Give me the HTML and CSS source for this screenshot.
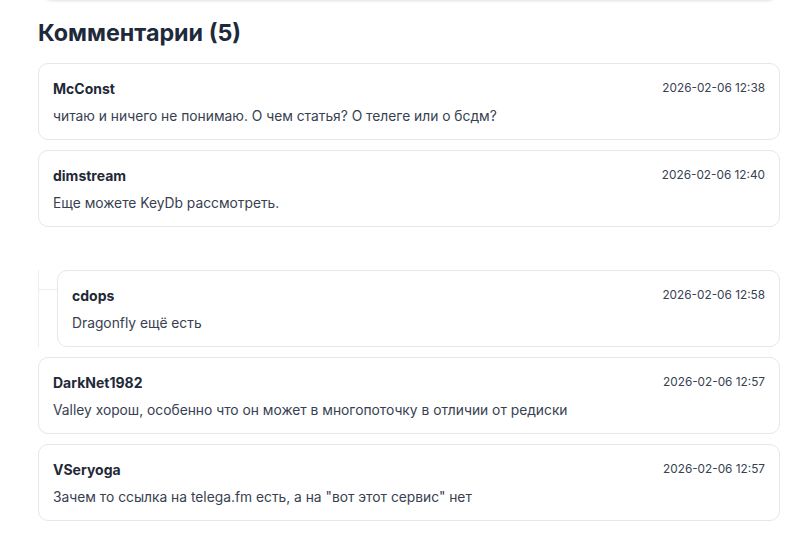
FILE: index.html
```html
<!DOCTYPE html>
<html lang="ru">
<head>
<meta charset="utf-8">
<title>Комментарии</title>
<link rel="stylesheet" href="styles.css">
</head>
<body>
<div class="prev-card"></div>
<section class="comments">
  <h2 class="title">Комментарии (5)</h2>
  <div class="list">
    <article class="comment">
      <div class="head"><span class="author">McConst</span><span class="date">2026-02-06 12:38</span></div>
      <p class="text">читаю и ничего не понимаю. О чем статья? О телеге или о бсдм?</p>
    </article>
    <article class="comment">
      <div class="head"><span class="author">dimstream</span><span class="date">2026-02-06 12:40</span></div>
      <p class="text">Еще можете KeyDb рассмотреть.</p>
    </article>
    <div class="thread">
      <span class="branch"></span>
      <article class="comment reply">
        <div class="head"><span class="author">cdops</span><span class="date">2026-02-06 12:58</span></div>
        <p class="text">Dragonfly ещё есть</p>
      </article>
    </div>
    <article class="comment">
      <div class="head"><span class="author">DarkNet1982</span><span class="date">2026-02-06 12:57</span></div>
      <p class="text">Valley хорош, особенно что он может в многопоточку в отличии от редиски</p>
    </article>
    <article class="comment">
      <div class="head"><span class="author">VSeryoga</span><span class="date">2026-02-06 12:57</span></div>
      <p class="text">Зачем то ссылка на telega.fm есть, а на "вот этот сервис" нет</p>
    </article>
  </div>
</section>
</body>
</html>
```
FILE: styles.css
```css
* { box-sizing: border-box; }
html, body { margin: 0; padding: 0; background: #ffffff; }
body {
  font-family: Inter, "Noto Sans", "DejaVu Sans", sans-serif;
  color: #1f2937;
  overflow: hidden;
}
.prev-card {
  margin: -20px 22px 0 42px;
  height: 20px;
  background: #fff;
  border-radius: 0 0 10px 10px;
  box-shadow: 0 1px 3px rgba(0,0,0,0.12);
}
.comments {
  padding: 0 20px 0 38px;
}
.title {
  margin: 19px 0 16px 0;
  font-size: 23.3px;
  line-height: 28px;
  font-weight: 700;
  color: #1e293b;
}
.list {
  display: flex;
  flex-direction: column;
  gap: 10px;
}
.comment {
  border: 1px solid #e5e7eb;
  border-radius: 10px;
  background: #fff;
  padding: 14px 14px 13px 14px;
}
.head {
  display: flex;
  justify-content: space-between;
  align-items: center;
  height: 20px;
}
.author {
  font-size: 14px;
  font-weight: 700;
  color: #1f2937;
}
.date {
  font-size: 11.8px;
  color: #374151;
}
.text {
  margin: 8px 0 0 0;
  font-size: 13.8px;
  line-height: 20px;
  color: #374151;
}
.thread {
  position: relative;
  margin-top: 33px;
  padding-left: 18px;
  border-left: 1px solid #eceef1;
}
.branch {
  position: absolute;
  left: 0;
  top: 19px;
  width: 18px;
  border-top: 1px solid #eceef1;
}
```
